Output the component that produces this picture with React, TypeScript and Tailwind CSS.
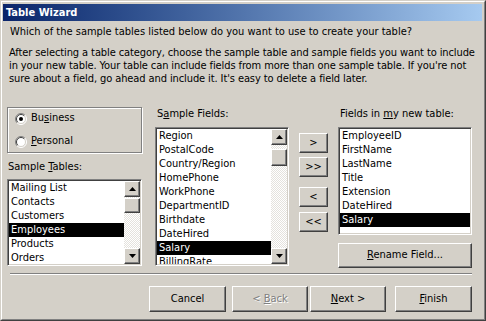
import type { ReactNode } from "react";

const raised =
  "border border-t-white border-l-white border-r-[#404040] border-b-[#404040] shadow-[inset_-1px_-1px_0_#808080] bg-[#d4d0c8]";
const sunken =
  "border border-t-[#808080] border-l-[#808080] border-r-white border-b-white shadow-[inset_1px_1px_0_#404040,inset_-1px_-1px_0_#d4d0c8]";

const sampleTables = ["Mailing List", "Contacts", "Customers", "Employees", "Products", "Orders"];
const sampleFields = [
  "Region",
  "PostalCode",
  "Country/Region",
  "HomePhone",
  "WorkPhone",
  "DepartmentID",
  "Birthdate",
  "DateHired",
  "Salary",
  "BillingRate",
];
const newFields = ["EmployeeID", "FirstName", "LastName", "Title", "Extension", "DateHired", "Salary"];

function Radio({ checked }: { checked?: boolean }) {
  return (
    <svg width="12" height="12" viewBox="0 0 12 12" className="shrink-0">
      <circle cx="6" cy="6" r="5" fill="white" />
      <path d="M2.1 9.9A5.5 5.5 0 0 1 9.9 2.1" fill="none" stroke="#808080" />
      <path d="M9.9 2.1A5.5 5.5 0 0 1 2.1 9.9" fill="none" stroke="#ffffff" />
      <path d="M2.8 9.2A4.5 4.5 0 0 1 9.2 2.8" fill="none" stroke="#404040" />
      <path d="M9.2 2.8A4.5 4.5 0 0 1 2.8 9.2" fill="none" stroke="#d4d0c8" />
      {checked && <circle cx="6" cy="6" r="2" fill="black" />}
    </svg>
  );
}

function ArrowButton({ down }: { down?: boolean }) {
  return (
    <div className={`${raised} h-[16px] w-[16px] flex items-center justify-center`}>
      <svg width="7" height="4" viewBox="0 0 7 4">
        {down ? <polygon points="0,0 7,0 3.5,4" fill="black" /> : <polygon points="3.5,0 7,4 0,4" fill="black" />}
      </svg>
    </div>
  );
}

function ScrollBar({ thumbClass }: { thumbClass: string }) {
  return (
    <div className="w-[16px] h-full flex flex-col shrink-0">
      <ArrowButton />
      <div className="flex-1 bg-[repeating-conic-gradient(#ffffff_0_25%,#e4e2dd_0_50%)] bg-[length:2px_2px]">
        <div className={`${raised} ${thumbClass}`} />
      </div>
      <ArrowButton down />
    </div>
  );
}

function ListBox({
  items,
  selected,
  className,
  thumbClass,
}: {
  items: string[];
  selected: string;
  className: string;
  thumbClass?: string;
}) {
  return (
    <div className={`${sunken} bg-white p-[1px] flex ${className}`}>
      <div className="flex-1 overflow-hidden">
        {items.map((item) => (
          <div
            key={item}
            className={`h-[14px] leading-[14px] pl-[2px] whitespace-nowrap ${
              item === selected ? "bg-black text-white" : "text-black"
            }`}
          >
            {item}
          </div>
        ))}
      </div>
      {thumbClass && <ScrollBar thumbClass={thumbClass} />}
    </div>
  );
}

function Button({ children, className, disabled }: { children: ReactNode; className: string; disabled?: boolean }) {
  return (
    <div
      className={`${raised} flex items-center justify-center ${className} ${
        disabled ? "text-[#808080] [text-shadow:1px_1px_0_#ffffff]" : "text-black"
      }`}
    >
      {children}
    </div>
  );
}

export default function App() {
  return (
    <div className="w-[486px] h-[321px] bg-[#d4d0c8] border border-t-[#d4d0c8] border-l-[#d4d0c8] border-r-[#404040] border-b-[#404040] text-[11px] text-black font-['DejaVu_Sans_Condensed','Liberation_Sans',sans-serif] [font-stretch:condensed]">
      <div className="h-full border border-t-white border-l-white border-r-[#808080] border-b-[#808080] pt-[2px] pl-[1px] pr-[2px] flex flex-col">
        <div className="h-[17px] shrink-0 bg-gradient-to-r from-[#0a246a] to-[#a6caf0] text-white font-bold leading-[17px] pl-[3px]">
          Table Wizard
        </div>

        <div className="mt-[4px] ml-[7px] leading-[13px]">
          Which of the sample tables listed below do you want to use to create your table?
        </div>
        <div className="mt-[8px] ml-[6px] leading-[13px] whitespace-nowrap tracking-[-0.1px]">
          After selecting a table category, choose the sample table and sample fields you want to include
          <br />
          in your new table. Your table can include fields from more than one sample table. If you're not
          <br />
          sure about a field, go ahead and include it. It's easy to delete a field later.
        </div>

        <div className="mt-[22px] ml-[4px] flex items-start">
          <div className="w-[135px] flex flex-col">
            <div className="h-[46px] border border-[#808080] shadow-[1px_1px_0_#ffffff,inset_1px_1px_0_#ffffff] flex flex-col justify-center gap-[11px] pl-[7px]">
              <div className="flex items-center gap-[4px] h-[12px]">
                <Radio checked />
                <span>
                  Bu<u>s</u>iness
                </span>
              </div>
              <div className="flex items-center gap-[4px] h-[12px]">
                <Radio />
                <span>
                  <u>P</u>ersonal
                </span>
              </div>
            </div>
            <div className="mt-[7px] ml-[1px] h-[14px] leading-[14px]">
              Sample <u>T</u>ables:
            </div>
            <ListBox
              items={sampleTables}
              selected="Employees"
              className="mt-[5px] h-[87px]"
              thumbClass="h-[15px] mt-[1px]"
            />
          </div>

          <div className="ml-[13px] w-[134px] flex flex-col">
            <div className="ml-[2px] h-[14px] leading-[14px]">
              S<u>a</u>mple Fields:
            </div>
            <ListBox
              items={sampleFields}
              selected="Salary"
              className="mt-[6px] h-[139px]"
              thumbClass="h-[17px] mt-[4px]"
            />
          </div>

          <div className="ml-[10px] mt-[26px] w-[29px] flex flex-col">
            <Button className="h-[20px]">&gt;</Button>
            <Button className="h-[20px] mt-[4px]">&gt;&gt;</Button>
            <Button className="h-[20px] mt-[10px]">&lt;</Button>
            <Button className="h-[20px] mt-[5px]">&lt;&lt;</Button>
          </div>

          <div className="ml-[10px] w-[134px] flex flex-col">
            <div className="ml-[2px] h-[14px] leading-[14px]">
              Fields in <u>m</u>y new table:
            </div>
            <ListBox items={newFields} selected="Salary" className="mt-[6px] h-[108px]" />
            <Button className="mt-[8px] h-[25px]">
              <span>
                <u>R</u>ename Field...
              </span>
            </Button>
          </div>
        </div>

        <div className="mt-[5px] ml-[7px] w-[462px] h-[2px] border-t border-t-[#808080] border-b border-b-white" />

        <div className="mt-[11px] ml-[146px] flex">
          <Button className="w-[77px] h-[26px]">Cancel</Button>
          <Button className="ml-[6px] w-[76px] h-[26px]" disabled>
            <span>
              &lt; <u>B</u>ack
            </span>
          </Button>
          <Button className="ml-[2px] w-[76px] h-[26px]">
            <span>
              <u>N</u>ext &gt;
            </span>
          </Button>
          <Button className="ml-[9px] w-[77px] h-[26px]">
            <span>
              <u>F</u>inish
            </span>
          </Button>
        </div>
      </div>
    </div>
  );
}
